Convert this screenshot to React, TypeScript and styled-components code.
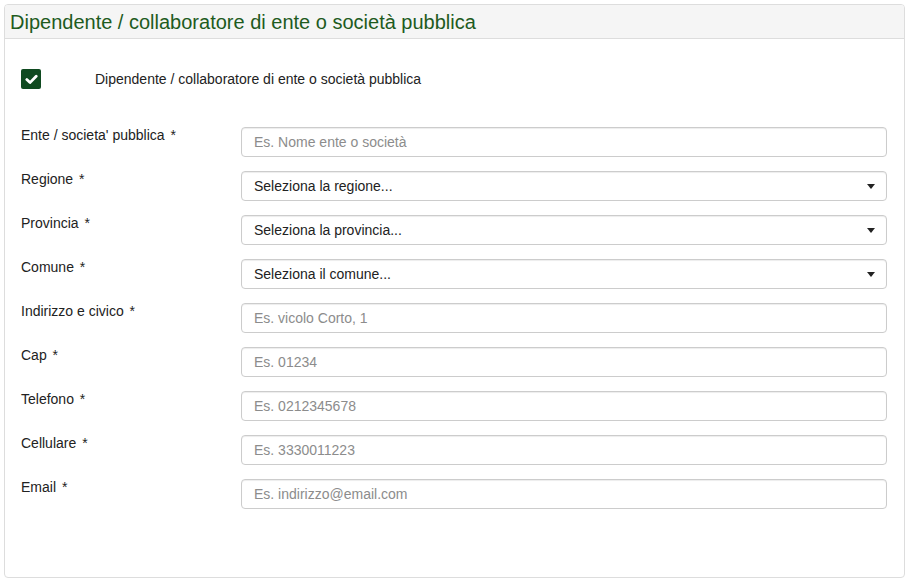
import styled, { createGlobalStyle } from 'styled-components';

const GlobalStyle = createGlobalStyle`
  body {
    margin: 0;
    background: #fff;
    font-family: "Liberation Sans", Arial, sans-serif;
    color: #333;
  }
`;

const Page = styled.div`
  padding: 4px 4px 6px 4px;
`;

const Panel = styled.div`
  border: 1px solid #ddd;
  border-radius: 4px;
  background: #fff;
  height: 574px;
  box-sizing: border-box;
`;

const PanelHeader = styled.div`
  background: #f5f5f5;
  border-bottom: 1px solid #ddd;
  border-radius: 3px 3px 0 0;
  height: 34px;
  box-sizing: border-box;
  padding: 5px 5px 0;
`;

const Title = styled.h3`
  margin: 0;
  font-size: 20px;
  font-weight: normal;
  color: #1e5b1e;
  line-height: 24px;
`;

const PanelBody = styled.div`
  padding: 30px 17px 0 16px;
`;

const CheckRow = styled.label`
  display: flex;
  align-items: center;
  height: 20px;
  font-size: 14px;
  color: #222;
  margin-bottom: 38px;
`;

const CheckBox = styled.span`
  width: 20px;
  height: 20px;
  border-radius: 2px;
  background: #0f4a20;
  display: flex;
  align-items: center;
  justify-content: center;
  margin-right: 54px;
`;

const Form = styled.div`
  display: flex;
  flex-direction: column;
  gap: 14px;
`;

const Row = styled.div`
  display: grid;
  grid-template-columns: 220px 1fr;
  align-items: start;
`;

const Label = styled.div`
  font-size: 14px;
  line-height: 20px;
  color: #222;
  margin-top: -2px;
`;

const Required = styled.span`
  margin-left: 2px;
`;

const Field = styled.div<{ $select?: boolean }>`
  height: 30px;
  box-sizing: border-box;
  border: 1px solid #ccc;
  border-radius: 4px;
  box-shadow: inset 0 1px 1px rgba(0, 0, 0, 0.075);
  padding: 0 12px;
  display: flex;
  align-items: center;
  justify-content: space-between;
  font-size: 14px;
  color: ${(p) => (p.$select ? '#222' : '#8c8c8c')};
`;

const Caret = styled.span`
  width: 0;
  height: 0;
  border-left: 4px solid transparent;
  border-right: 4px solid transparent;
  border-top: 5px solid #222;
  margin-right: -1px;
`;

const rows: { label: string; text: string; select?: boolean }[] = [
  { label: "Ente / societa' pubblica", text: 'Es. Nome ente o società' },
  { label: 'Regione', text: 'Seleziona la regione...', select: true },
  { label: 'Provincia', text: 'Seleziona la provincia...', select: true },
  { label: 'Comune', text: 'Seleziona il comune...', select: true },
  { label: 'Indirizzo e civico', text: 'Es. vicolo Corto, 1' },
  { label: 'Cap', text: 'Es. 01234' },
  { label: 'Telefono', text: 'Es. 0212345678' },
  { label: 'Cellulare', text: 'Es. 3330011223' },
  { label: 'Email', text: 'Es. indirizzo@email.com' },
];

function App() {
  return (
    <Page>
      <GlobalStyle />
      <Panel>
        <PanelHeader>
          <Title>Dipendente / collaboratore di ente o società pubblica</Title>
        </PanelHeader>
        <PanelBody>
          <CheckRow>
            <CheckBox>
              <svg width="13" height="11" viewBox="0 0 13 11">
                <path d="M1.8 5.6 L5 8.6 L11.2 2.2" fill="none" stroke="#fff" strokeWidth="2.8" strokeLinecap="round" strokeLinejoin="round" />
              </svg>
            </CheckBox>
            Dipendente / collaboratore di ente o società pubblica
          </CheckRow>
          <Form>
            {rows.map((r) => (
              <Row key={r.label}>
                <Label>
                  {r.label} <Required>*</Required>
                </Label>
                <Field $select={r.select}>
                  {r.text}
                  {r.select && <Caret />}
                </Field>
              </Row>
            ))}
          </Form>
        </PanelBody>
      </Panel>
    </Page>
  );
}

export default App;
